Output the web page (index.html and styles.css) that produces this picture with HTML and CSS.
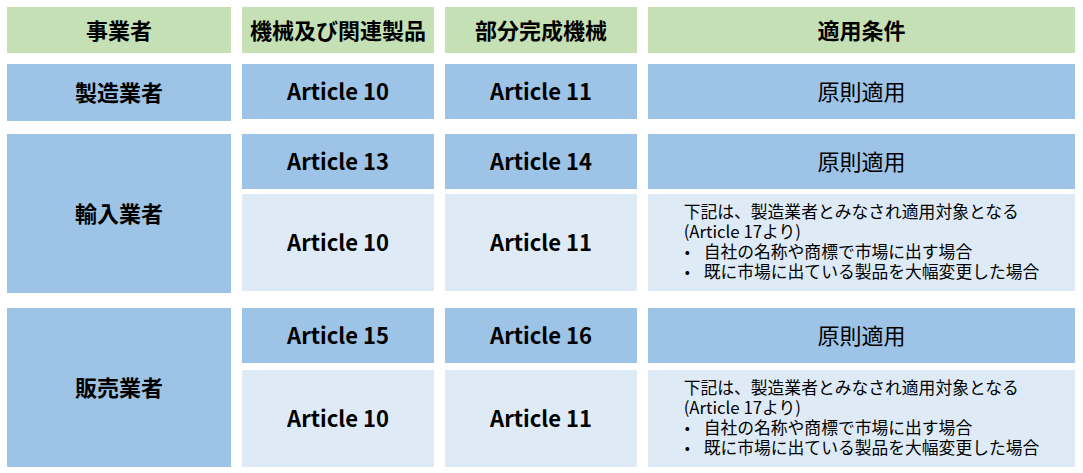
FILE: index.html
```html
<!DOCTYPE html>
<html lang="ja">
<head>
<meta charset="utf-8">
<title>事業者と適用条件</title>
<link rel="stylesheet" href="styles.css">
</head>
<body>
<div class="table">
  <div class="row head">
    <div class="cell c1 green bold">事業者</div>
    <div class="cell c2 green bold">機械及び関連製品</div>
    <div class="cell c3 green bold">部分完成機械</div>
    <div class="cell c4 green bold">適用条件</div>
  </div>

  <div class="row group g1">
    <div class="cell c1 blue bold tall1">製造業者</div>
    <div class="sub">
      <div class="row subrow">
        <div class="cell c2 blue bold art">Article 10</div>
        <div class="cell c3 blue bold art">Article 11</div>
        <div class="cell c4 blue">原則適用</div>
      </div>
    </div>
  </div>

  <div class="row group g2">
    <div class="cell c1 blue bold tall2">輸入業者</div>
    <div class="sub gap5">
      <div class="row subrow">
        <div class="cell c2 blue bold art">Article 13</div>
        <div class="cell c3 blue bold art">Article 14</div>
        <div class="cell c4 blue">原則適用</div>
      </div>
      <div class="row subrow big">
        <div class="cell c2 light bold art">Article 10</div>
        <div class="cell c3 light bold art">Article 11</div>
        <div class="cell c4 light">
          <div class="cond">
            <div>下記は、製造業者とみなされ適用対象となる</div>
            <div>(Article 17より)</div>
            <div class="bullet"><span class="dot">•</span>自社の名称や商標で市場に出す場合</div>
            <div class="bullet"><span class="dot">•</span>既に市場に出ている製品を大幅変更した場合</div>
          </div>
        </div>
      </div>
    </div>
  </div>

  <div class="row group g3">
    <div class="cell c1 blue bold tall2">販売業者</div>
    <div class="sub gap7">
      <div class="row subrow">
        <div class="cell c2 blue bold art">Article 15</div>
        <div class="cell c3 blue bold art">Article 16</div>
        <div class="cell c4 blue">原則適用</div>
      </div>
      <div class="row subrow big">
        <div class="cell c2 light bold art">Article 10</div>
        <div class="cell c3 light bold art">Article 11</div>
        <div class="cell c4 light">
          <div class="cond">
            <div>下記は、製造業者とみなされ適用対象となる</div>
            <div>(Article 17より)</div>
            <div class="bullet"><span class="dot">•</span>自社の名称や商標で市場に出す場合</div>
            <div class="bullet"><span class="dot">•</span>既に市場に出ている製品を大幅変更した場合</div>
          </div>
        </div>
      </div>
    </div>
  </div>
</div>
</body>
</html>
```

FILE: styles.css
```css
html, body {
  margin: 0;
  padding: 0;
  background: #ffffff;
}
body {
  font-family: "Noto Sans CJK JP", "Noto Sans", sans-serif;
  color: #000000;
}
.table {
  padding: 7px 0 0 7px;
  display: flex;
  flex-direction: column;
}
.row {
  display: flex;
  gap: 11px;
  align-items: flex-start;
}
.cell {
  display: flex;
  align-items: center;
  justify-content: center;
  font-size: 22px;
  line-height: 1;
  box-sizing: border-box;
  padding-bottom: 3px;
}
.bold { font-weight: 700; }
.art { font-size: 22px; padding-bottom: 4px; }
.c1 { width: 224px; }
.c2 { width: 192px; }
.c3 { width: 192px; }
.c4 { width: 427px; }
.green { background: #c5e0b4; }
.blue { background: #9dc3e6; }
.light { background: #deebf7; }
.head .cell { height: 46px; padding-bottom: 2px; }
.g1 { margin-top: 11px; }
.g2 { margin-top: 13px; }
.g3 { margin-top: 15px; }
.tall1 { height: 57px; }
.tall2 { height: 159px; }
.sub {
  display: flex;
  flex-direction: column;
}
.gap5 { gap: 5px; }
.gap7 { gap: 7px; }
.subrow .cell { height: 55px; }
.subrow.big .cell { height: 97px; }
.subrow.big .c4 { padding-bottom: 4px; }
.cond {
  font-size: 16.8px;
  line-height: 20px;
  font-weight: 400;
  text-align: left;
}
.bullet {
  display: flex;
}
.dot {
  display: inline-block;
  width: 19px;
  padding-left: 1px;
  text-align: left;
  font-size: 15px;
}
```
